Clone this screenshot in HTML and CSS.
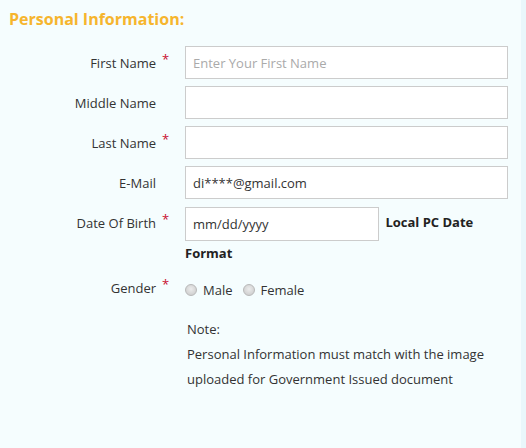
FILE: index.html
```html
<!DOCTYPE html>
<html>
<head>
<meta charset="utf-8">
<title>Personal Information</title>
<link rel="stylesheet" href="styles.css">
</head>
<body>
<div id="Screen">
    <h2 class="section_title">Personal Information:</h2>
    <div class="form_grid">
        <label class="form_label" for="FirstName">First Name</label><span class="req">*</span>
        <div class="form_field"><input type="text" id="FirstName" placeholder="Enter Your First Name"></div>

        <label class="form_label" for="MiddleName">Middle Name</label><span class="req"></span>
        <div class="form_field"><input type="text" id="MiddleName"></div>

        <label class="form_label" for="LastName">Last Name</label><span class="req">*</span>
        <div class="form_field"><input type="text" id="LastName"></div>

        <label class="form_label" for="EMail">E-Mail</label><span class="req"></span>
        <div class="form_field"><input type="text" id="EMail" value="di****@gmail.com"></div>

        <label class="form_label dob_label" for="DOB">Date Of Birth</label><span class="req dob_label">*</span>
        <div class="form_field dob_field"><input type="text" id="DOB" value="mm/dd/yyyy"> <b>Local PC Date Format</b></div>

        <span class="form_label">Gender</span><span class="req">*</span>
        <div class="form_field gender_field">
            <label><input type="radio" name="gender"> Male</label>
            <label><input type="radio" name="gender"> Female</label>
        </div>

        <span></span><span></span>
        <div class="note">
            Note:<br>
            Personal Information must match with the image uploaded for Government Issued document
        </div>
    </div>
</div>
</body>
</html>
```

FILE: styles.css
```css
html,body{
    height:100%;
    margin:0;
}
body{
    background-color:#f5fdfe;
    font-family:"Open Sans", "DejaVu Sans", sans-serif;
    font-size:13px;
    color:#333333;
}
button, input, select, textarea {
    font-family:inherit;
    font-size:100%;
}
#Screen
{
    height:100%;
    box-sizing:border-box;
    padding:8px 0 0 9px;
    border-right:5px solid #e9f7fb;
}
.section_title
{
    margin:0;
    font-size:16px;
    font-weight:bold;
    line-height:22px;
    color:#f6b52e;
}
.form_grid
{
    display:grid;
    grid-template-columns:147px 29px 323px;
    row-gap:7px;
    margin-top:16px;
    align-items:center;
}
.form_label
{
    text-align:right;
}
.req
{
    color:#c8102e;
    padding-left:6px;
    margin-bottom:7px;
}
.dob_label
{
    align-self:start;
    padding-top:8px;
}
.req.dob_label
{
    padding-top:4px;
}
.form_field input[type="text"]
{
    display:block;
    width:100%;
    height:33px;
    box-sizing:border-box;
    border:1px solid #cccccc;
    background:#ffffff;
    padding:0 7px;
    color:#333333;
    outline:none;
}
.form_field input::placeholder
{
    color:#aaaaaa;
}
.dob_field
{
    line-height:25px;
    margin-top:1px;
    margin-bottom:2px;
}
.dob_field input[type="text"]
{
    display:inline-block;
    width:194px;
    height:34px;
    vertical-align:middle;
    margin-right:3px;
}
.dob_field b
{
    color:#222222;
}
.gender_field
{
    display:flex;
    gap:10px;
    margin-top:4px;
}
.gender_field label
{
    display:flex;
    align-items:center;
    gap:6px;
}
input[type="radio"]
{
    appearance:none;
    margin:0;
    width:12px;
    height:12px;
    border-radius:50%;
    border:1px solid #b8b8b8;
    background:radial-gradient(circle at 50% 40%, #ececec 0, #d2d2d2 70%);
}
.note
{
    margin-top:10px;
    padding-left:2px;
    line-height:25px;
    color:#333333;
}
```
